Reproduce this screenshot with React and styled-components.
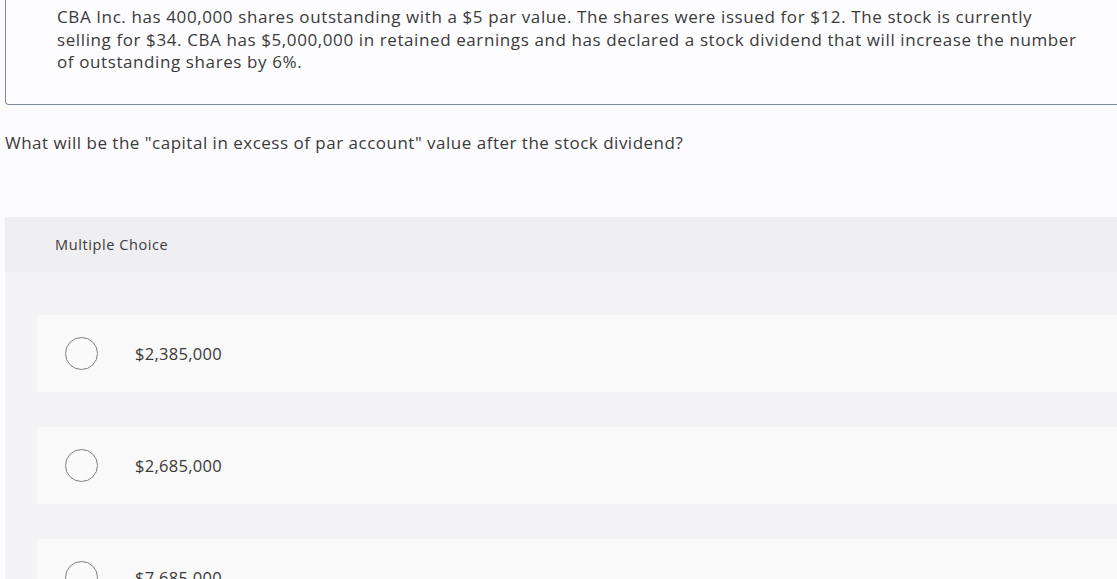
import React from "react";
import styled, { createGlobalStyle } from "styled-components";

const Global = createGlobalStyle`
  html, body { margin: 0; padding: 0; }
  body {
    background: #fcfcfe;
    overflow: hidden;
    font-family: "Open Sans", Lato, Arial, sans-serif;
    color: #3a3a3a;
  }
`;

const Page = styled.div`
  width: 1117px;
  height: 579px;
  padding-left: 5px;
  box-sizing: border-box;
  overflow: hidden;
`;

const StemBox = styled.div`
  margin-right: -30px;
  border: 1px solid #7b889b;
  border-top: none;
  border-bottom-left-radius: 4px;
  background: #fdfdff;
  padding: 6px 60px 30px 51px;
  font-size: 17px;
  line-height: 22.5px;
  letter-spacing: 0.6px;
  white-space: nowrap;
`;

const Question = styled.p`
  margin: 28px 0 0;
  font-size: 17px;
  line-height: 20px;
  letter-spacing: 0.5px;
`;

const Panel = styled.section`
  margin: 64px -30px 0 0;
  background: #f4f4f6;
`;

const PanelHeader = styled.div`
  height: 55px;
  display: flex;
  align-items: center;
  padding-left: 50px;
  background: #efeef1;
  font-size: 14.5px;
  letter-spacing: 0.6px;
`;

const OptionList = styled.div`
  padding: 43px 0 0 32px;
  display: flex;
  flex-direction: column;
  gap: 35px;
`;

const OptionRow = styled.label`
  height: 77px;
  display: flex;
  align-items: center;
  background: #f9f9f9;
  padding-left: 28px;
`;

const Radio = styled.span`
  width: 31px;
  height: 31px;
  border-radius: 50%;
  border: 1.5px solid #7e7e7e;
  background: #fafafa;
  flex: none;
`;

const OptionText = styled.span`
  margin-left: 37px;
  font-size: 16.5px;
  letter-spacing: 0.3px;
`;

const options = ["$2,385,000", "$2,685,000", "$7,685,000"];

export default function App() {
  return (
    <>
      <Global />
      <Page>
        <StemBox>
          CBA Inc. has 400,000 shares outstanding with a $5 par value. The shares were issued for $12. The stock is currently
          <br />
          selling for $34. CBA has $5,000,000 in retained earnings and has declared a stock dividend that will increase the number
          <br />
          of outstanding shares by 6%.
        </StemBox>
        <Question>
          What will be the "capital in excess of par account" value after the stock dividend?
        </Question>
        <Panel>
          <PanelHeader>Multiple Choice</PanelHeader>
          <OptionList>
            {options.map((o) => (
              <OptionRow key={o}>
                <Radio />
                <OptionText>{o}</OptionText>
              </OptionRow>
            ))}
          </OptionList>
        </Panel>
      </Page>
    </>
  );
}
